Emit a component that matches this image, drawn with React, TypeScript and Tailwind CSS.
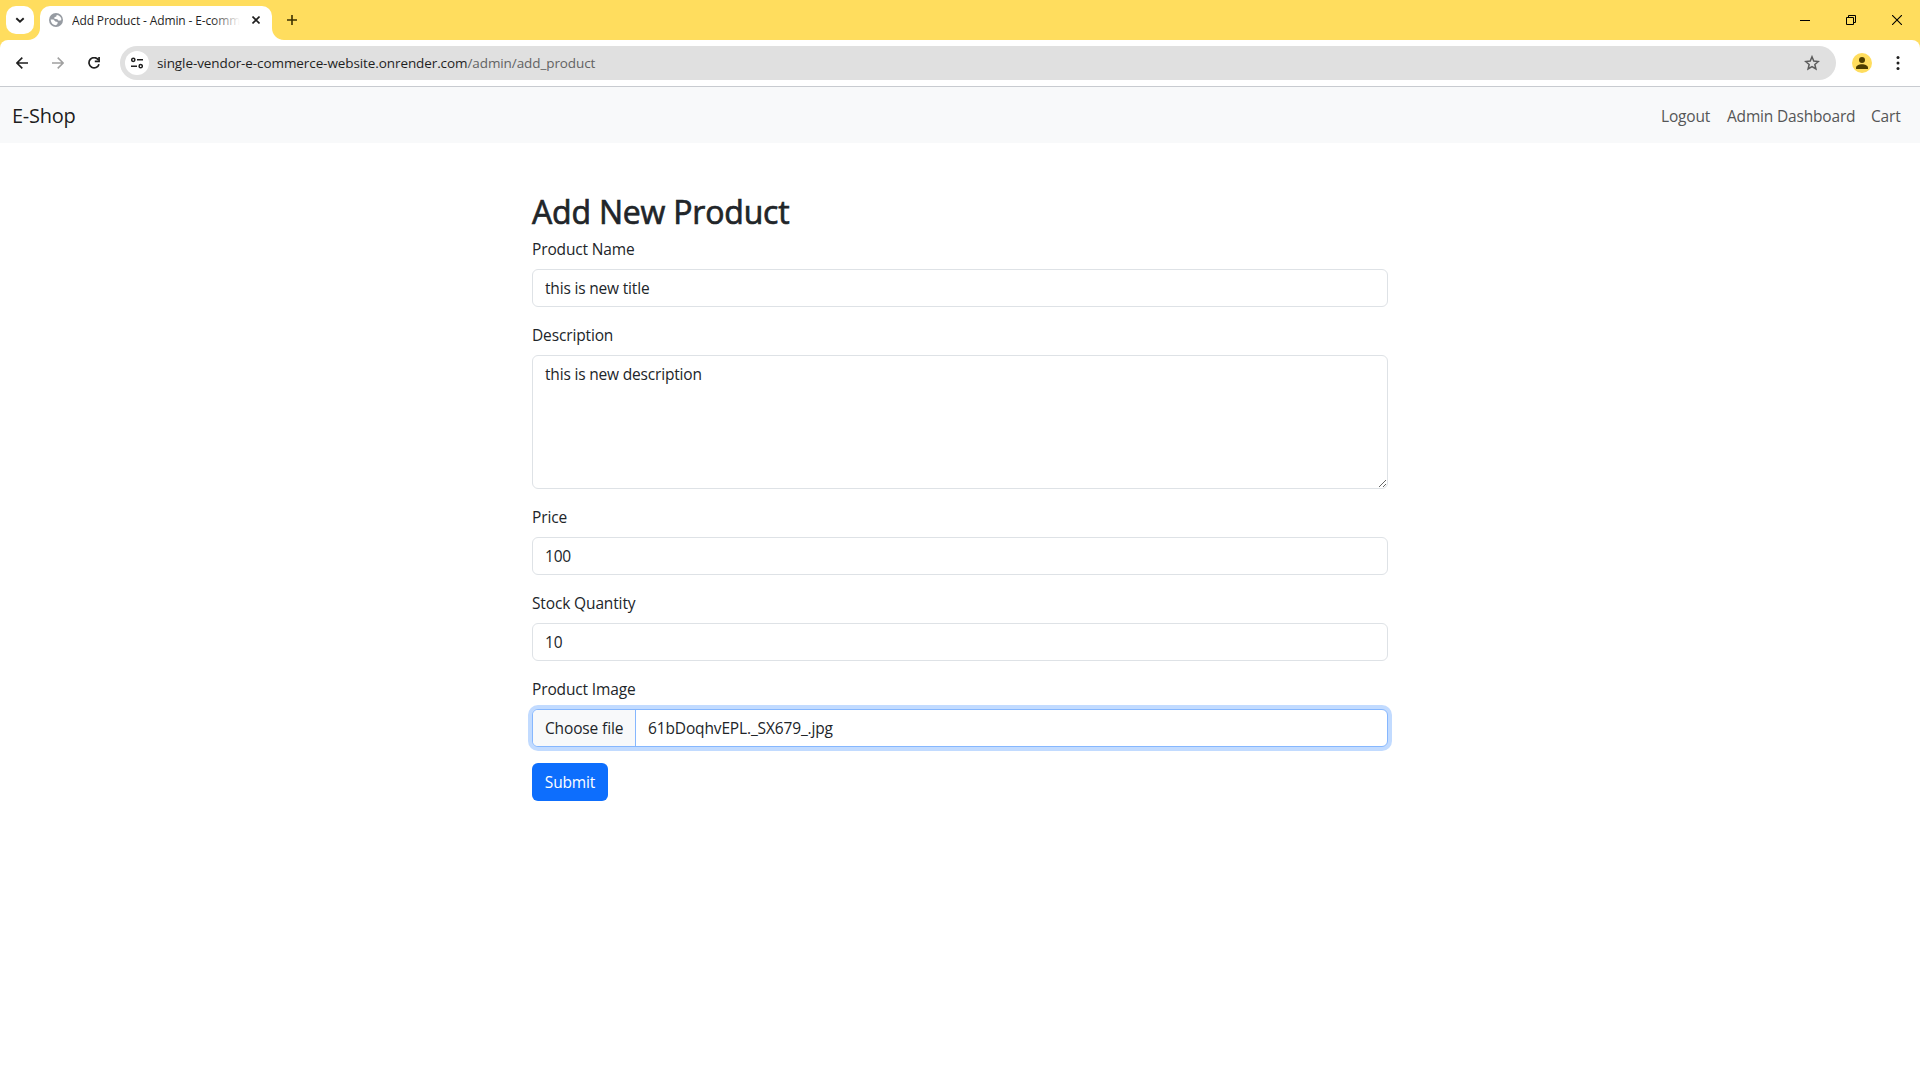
import type { ReactNode } from "react";

function TabStrip() {
  return (
    <div className="flex h-10 w-full items-end bg-[#ffdd5e]">
      <div className="mb-1.5 ml-1.5 flex size-7 items-center justify-center rounded-[10px] bg-white">
        <svg width="10" height="10" viewBox="0 0 10 10" fill="none" stroke="#1f1f1f" strokeWidth="1.9">
          <path d="M1.3 3.2 5 6.7 8.7 3.2" />
        </svg>
      </div>
      <div className="relative ml-1.5 flex h-[34px] w-[232px] items-center rounded-t-[10px] bg-white pb-[6px]">
        <svg className="absolute bottom-0 -left-3" width="12" height="12" viewBox="0 0 12 12" fill="#fff">
          <path d="M12 0v12H0C6.6 12 12 6.6 12 0z" />
        </svg>
        <svg className="absolute bottom-0 -right-3" width="12" height="12" viewBox="0 0 12 12" fill="#fff">
          <path d="M0 0v12h12C5.4 12 0 6.6 0 0z" />
        </svg>
        <svg className="ml-[9px] shrink-0" width="14" height="14" viewBox="0 0 14 14">
          <circle cx="7" cy="7" r="7" fill="#969ba2" />
          <path
            d="M12.200 5.200C11.400 3.200 9.600 2 7.700 1.900L7.300 3.400 5.400 4.200 5.300 5.700 8.300 6.200 9.700 7.700 12.300 7.300zM1.700 6.500 4.500 6.600 6.300 8.500 8.700 9 8.400 10.900 6.900 12.200C4.200 12.200 1.700 10 1.700 6.500z"
            fill="#fff"
          />
        </svg>
        <div className="relative top-px ml-[9px] w-[168px] overflow-hidden text-[12px] leading-4 tracking-[-0.13px] whitespace-nowrap text-[#1f1f1f]">
          Add Product - Admin - E-comm
          <div className="absolute inset-y-0 right-0 w-7 bg-linear-to-r from-white/0 to-white" />
        </div>
        <svg className="ml-3 shrink-0" width="8" height="8" viewBox="0 0 8 8" stroke="#1f1f1f" strokeWidth="1.6">
          <path d="M.5.5l7 7M7.5.5l-7 7" />
        </svg>
      </div>
      <svg className="mb-[15px] ml-[15px]" width="10" height="10" viewBox="0 0 10 10" stroke="#3c3000" strokeWidth="1.6">
        <path d="M5 0v10M0 5h10" />
      </svg>
      <div className="mr-[18px] mb-[15px] ml-auto flex gap-9">
        <svg width="10" height="10" viewBox="0 0 10 10" fill="none" stroke="#000">
          <path d="M0 5.5h10" />
        </svg>
        <svg width="10" height="10" viewBox="0 0 10 10" fill="none" stroke="#000">
          <path d="M.5 2.5h7v7h-7zM2.5 2.5v-2h7v7h-2" />
        </svg>
        <svg width="10" height="10" viewBox="0 0 10 10" fill="none" stroke="#000" strokeWidth="1.1">
          <path d="M0 0l10 10M10 0L0 10" />
        </svg>
      </div>
    </div>
  );
}

function Toolbar() {
  return (
    <div className="bg-[#ffdd5e]">
      <div className="flex h-[47px] items-center rounded-t-lg border-b border-[#c8cbd0] bg-white">
        <svg className="ml-4" width="12" height="12" viewBox="0 0 12 12" fill="none" stroke="#1f1f1f" strokeWidth="1.6">
          <path d="M6.3.6.9 6l5.4 5.4M1 6h11" />
        </svg>
        <svg className="ml-6" width="12" height="12" viewBox="0 0 12 12" fill="none" stroke="#a0a0a0" strokeWidth="1.5">
          <path d="M5.7.6 11.1 6l-5.4 5.4M11 6H0" />
        </svg>
        <svg className="ml-6" width="12" height="12" viewBox="0 0 12 12" fill="none" stroke="#1f1f1f" strokeWidth="1.7">
          <path d="M10.2 2.7A5.1 5.1 0 1 0 11 7.2M11.1 0v4.3H6.8" />
        </svg>
        <div className="ml-5 flex h-[34px] w-[1716px] items-center rounded-full bg-[#e0e0e0] pl-[5px]">
          <div className="flex size-6 items-center justify-center rounded-full bg-white">
            <svg width="12" height="12" viewBox="0 0 12 12" fill="none" stroke="#1f1f1f" strokeWidth="1.5">
              <circle cx="2.3" cy="2.8" r="1.6" />
              <circle cx="9.7" cy="9.2" r="1.6" />
              <path d="M6 2.8h6M0 9.2h6" />
            </svg>
          </div>
          <div className="ml-2 text-[13.5px] leading-5 tracking-[-0.09px] text-[#1f1f1f]">
            single-vendor-e-commerce-website.onrender.com<span className="text-[#636363]">/admin/add_product</span>
          </div>
          <svg className="mr-4 ml-auto" width="16" height="16" viewBox="0 0 16 16" fill="none" stroke="#5c5c5c" strokeWidth="1.5">
            <path d="M8 1.800l1.750 4.300 4.600.4-3.500 3 1.050 4.500L8 11.600l-3.900 2.400L5.150 9.500 1.650 6.500l4.600-.4z" />
          </svg>
        </div>
        <svg className="ml-4" width="20" height="20" viewBox="0 0 20 20">
          <circle cx="10" cy="10" r="10" fill="#ffdd5e" />
          <circle cx="10" cy="7" r="3" fill="#4d3d00" />
          <path d="M4 16v-1.400c0-2 3-3.400 6-3.400s6 1.400 6 3.400V16z" fill="#4d3d00" />
        </svg>
        <svg className="ml-6" width="4" height="14" viewBox="0 0 4 14" fill="#1f1f1f">
          <circle cx="2" cy="1.500" r="1.5" />
          <circle cx="2" cy="7" r="1.5" />
          <circle cx="2" cy="12.500" r="1.5" />
        </svg>
      </div>
    </div>
  );
}

function Field({ label, children }: { label: string; children: ReactNode }) {
  return (
    <div className="mb-4">
      <label className="mb-2 block h-6">{label}</label>
      {children}
    </div>
  );
}

const control =
  "block w-full rounded-md border border-[#dee2e6] bg-white px-3 py-[6px] text-[#212529] outline-none tracking-[-0.18px]";

export default function App() {
  return (
    <div className="min-h-[1078px] bg-white font-['Segoe_UI','Open_Sans',sans-serif]">
      <TabStrip />
      <Toolbar />
      <nav className="flex h-14 items-center justify-between bg-[#f8f9fa] px-3 pt-[2px]">
        <a className="text-[20px] leading-[30px] tracking-[-0.25px] text-black/90">E-Shop</a>
        <div className="flex gap-4 pr-2 text-[15.5px] leading-6 tracking-[-0.18px] text-[#555657]">
          <a className="w-[50px]">Logout</a>
          <a className="w-[128px] whitespace-nowrap">Admin Dashboard</a>
          <a className="w-[29px]">Cart</a>
        </div>
      </nav>
      <main className="mx-auto mt-12 w-[856px] text-[15.5px] leading-6 tracking-[-0.14px] text-[#212529]">
        <h2 className="mb-[6px] pt-[2px] text-[32px] leading-[38px] tracking-[-0.2px] [-webkit-text-stroke:0.7px_#212529]">
          Add New Product
        </h2>
        <form>
          <Field label="Product Name">
            <input className={control} defaultValue="this is new title" />
          </Field>
          <Field label="Description">
            <textarea className={`${control} h-[134px] resize-y`} defaultValue="this is new description" />
          </Field>
          <Field label="Price">
            <input className={control} defaultValue="100" />
          </Field>
          <Field label="Stock Quantity">
            <input className={control} defaultValue="10" />
          </Field>
          <Field label="Product Image">
            <div className="flex h-[38px] overflow-hidden rounded-md border border-[#86b7fe] bg-white shadow-[0_0_0_4px_#c2dbff]">
              <span className="w-[103px] border-r border-[#86b7fe] bg-[#f8f9fa] py-[6px] pl-3 whitespace-nowrap">Choose file</span>
              <span className="py-[6px] pl-3">61bDoqhvEPL._SX679_.jpg</span>
            </div>
          </Field>
          <button type="button" className="h-[38px] w-[76px] rounded-md bg-[#0d6efd] text-center tracking-[-0.14px] text-white">
            Submit
          </button>
        </form>
      </main>
    </div>
  );
}
